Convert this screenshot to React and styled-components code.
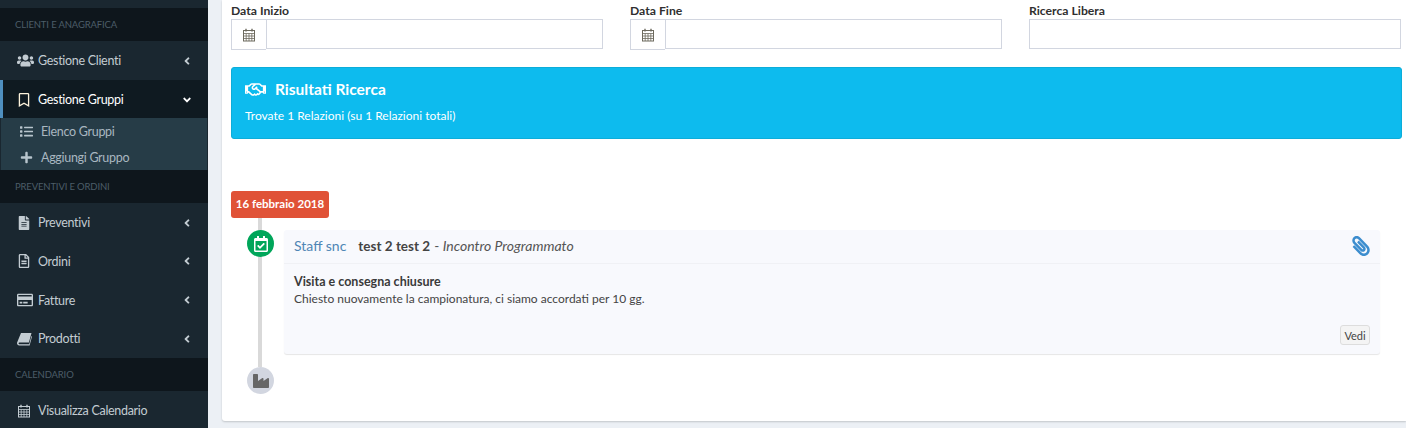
import styled, { createGlobalStyle } from "styled-components";
import {
  FaUsers,
  FaRegBookmark,
  FaList,
  FaPlus,
  FaFileAlt,
  FaRegFileAlt,
  FaRegCreditCard,
  FaAngleLeft,
  FaAngleDown,
  FaRegHandshake,
  FaRegCalendarCheck,
  FaIndustry,
  FaPaperclip,
} from "react-icons/fa";

const GlobalStyle = createGlobalStyle`
  html, body {
    margin: 0;
    height: 428px;
    overflow: hidden;
    background: #ecf0f5;
    font-family: "Lato", "Noto Sans", sans-serif;
    font-size: 13px;
    color: #333;
  }
  * { box-sizing: border-box; }
`;

const Page = styled.div`
  display: flex;
  width: 1406px;
  height: 428px;
  overflow: hidden;
`;

const Sidebar = styled.aside`
  width: 208px;
  flex: none;
  padding-top: 8px;
  background: #1a2730;
`;

const SectionTitle = styled.div`
  height: 33px;
  padding-left: 15px;
  display: flex;
  align-items: center;
  background: #0e161c;
  color: #4c5d68;
  font-size: 9.5px;
  letter-spacing: -0.15px;
`;

const MenuRow = styled.div`
  height: ${(p) => p.$h || 38.75}px;
  display: flex;
  align-items: center;
  padding-left: ${(p) => (p.$active ? 14 : 17)}px;
  padding-right: 15px;
  padding-top: ${(p) => (p.$active ? 2 : 1)}px;
  border-left: ${(p) => (p.$active ? "3px solid #4f8fbf" : "none")};
  background: ${(p) => (p.$active ? "#0f1a21" : "transparent")};
  color: ${(p) => (p.$active ? "#fff" : "#c3ccd2")};
  font-size: 12.5px;
  letter-spacing: -0.3px;
`;

const MenuIcon = styled.span`
  width: 21px;
  flex: none;
  display: flex;
  align-items: center;
  font-size: ${(p) => p.$size || 14}px;
  color: ${(p) => (p.$active ? "#fdf3dc" : "#c3ccd2")};
`;

const MenuLabel = styled.span`
  flex: 1;
`;

const Arrow = styled.span`
  display: flex;
  font-size: 12px;
`;

const SubMenu = styled.div`
  height: 52px;
  margin-left: 1px;
  margin-right: 1px;
  background: #263c47;
`;

const SubRow = styled.div`
  height: 26px;
  display: flex;
  align-items: center;
  padding-left: 19px;
  padding-top: 2px;
  color: #a9b7c0;
  font-size: 12.5px;
  letter-spacing: -0.3px;

  svg {
    flex: none;
    width: 13px;
    height: 13px;
    margin-right: 8px;
    color: #b8c5cd;
  }
`;

const Main = styled.main`
  flex: 1;
  margin-left: 14px;
  height: 421px;
  padding: 3px 4px 0 9px;
  background: #fff;
  border-radius: 0 0 0 3px;
  box-shadow: 0 1px 2px rgba(0, 0, 0, 0.18);
`;

const Filters = styled.div`
  display: grid;
  grid-template-columns: 372px 372px 372px;
  column-gap: 27px;
`;

const FieldLabel = styled.label`
  display: block;
  height: 16px;
  line-height: 15px;
  font-size: 12.2px;
  font-weight: 700;
  color: #2f2f2f;
`;

const InputGroup = styled.div`
  display: flex;
  align-items: flex-start;
`;

const Addon = styled.span`
  width: 35px;
  height: 31px;
  flex: none;
  display: flex;
  align-items: center;
  justify-content: center;
  border: 1px solid #d2d6e0;
  border-right: none;
  color: #6d6a5e;
`;

const Input = styled.div`
  flex: 1;
  height: 30px;
  border: 1px solid #d2d6e0;
  background: #fff;
`;

const Callout = styled.section`
  width: 1171px;
  height: 72px;
  margin-top: 17px;
  padding: 10px 13px;
  background: #0dbbee;
  border: 1px solid #0cadd9;
  border-radius: 3px;
  color: #fff;
`;

const CalloutTitle = styled.h4`
  margin: 0;
  height: 22px;
  display: flex;
  align-items: center;
  gap: 9px;
  font-size: 15.5px;
  font-weight: 700;

  svg {
    font-size: 21px;
  }
`;

const CalloutText = styled.p`
  margin: 8px 0 0;
  font-size: 12px;
`;

const Timeline = styled.div`
  margin-top: 52px;
  width: 1149px;
`;

const DateBadge = styled.span`
  display: flex;
  align-items: center;
  justify-content: center;
  width: 98px;
  height: 27px;
  padding-bottom: 2px;
  background: #e05237;
  border-radius: 3px;
  color: #fff;
  font-size: 11.5px;
  font-weight: 700;
`;

const Track = styled.div`
  position: relative;
  padding: 12px 0 13px 53px;

  &::before {
    content: "";
    position: absolute;
    left: 27px;
    top: 0;
    bottom: 0;
    width: 4px;
    background: #d9d9d9;
  }
`;

const Dot = styled.span`
  position: absolute;
  left: 16px;
  top: ${(p) => p.$top}px;
  width: 27px;
  height: 27px;
  border-radius: 50%;
  display: flex;
  align-items: center;
  justify-content: center;
  background: ${(p) => p.$bg};
  color: ${(p) => p.$fg};
  font-size: 16px;
`;

const Card = styled.article`
  width: 1096px;
  height: 124px;
  display: flex;
  flex-direction: column;
  background: #f8f9fd;
  border-radius: 3px;
  box-shadow: 0 1px 1px rgba(0, 0, 0, 0.1);
`;

const CardHeader = styled.header`
  height: 34px;
  flex: none;
  display: flex;
  align-items: center;
  padding: 0 9px 2px 10px;
  border-bottom: 1px solid #f0f1f5;
  font-size: 13.5px;
  color: #555;
`;

const Company = styled.span`
  color: #4f86b5;
  font-size: 14px;
  margin-right: 12px;
`;

const Person = styled.strong`
  color: #444;
  margin-right: 4px;
`;

const Title = styled.em`
  font-size: 14px;
`;

const Clip = styled.span`
  margin-left: auto;
  display: flex;
  color: #3c8dce;
  font-size: 20px;
  transform: scaleX(-1);
`;

const CardBody = styled.div`
  flex: 1;
  padding: 9px 10px 0;
  font-size: 12px;
  line-height: 17px;
  color: #444;
`;

const CardTitle = styled.div`
  font-size: 12.5px;
  font-weight: 700;
  color: #3a3a3a;
`;

const CardFooter = styled.div`
  display: flex;
  justify-content: flex-end;
  padding: 0 10px 9px;
`;

const SmallButton = styled.button`
  width: 30px;
  height: 20px;
  padding: 0;
  background: #f4f4f4;
  border: 1px solid #ddd;
  border-radius: 3px;
  font-family: inherit;
  font-size: 11px;
  color: #444;
`;

// fa4 calendar, the fa5 one in react-icons has no visible grid
const CalendarIcon = () => (
  <svg width="14" height="14" viewBox="0 0 14 14" fill="none" stroke="currentColor">
    <rect x="1.5" y="2.5" width="11" height="10.5" strokeWidth="1" />
    <path d="M1.5 5.5h11M1.5 8h11M1.5 10.5h11M4.2 5.5V13M7 5.5V13M9.8 5.5V13" strokeWidth="0.8" />
    <path d="M4 .8v2.6M10 .8v2.6" strokeWidth="1.4" />
  </svg>
);

// fa4 book is slanted
const BookIcon = () => (
  <svg width="15" height="14" viewBox="0 0 15 14" fill="currentColor">
    <path d="M4 1h10.5l-2.6 9.6H2.6c-.7 0-1 .4-1 .8s.3.9 1 .9h9.6l2.2-8.2.6.4-2.4 8.9H2.4C.9 13.4 0 12.4 0 11.3c0-.3 0-.6.1-.9z" />
  </svg>
);

const menuA = [{ icon: <FaUsers />, label: "Gestione Clienti", size: 17 }];
const menuB = [
  { icon: <FaFileAlt />, label: "Preventivi", size: 14 },
  { icon: <FaRegFileAlt />, label: "Ordini", size: 14 },
  { icon: <FaRegCreditCard />, label: "Fatture", size: 16 },
  { icon: <BookIcon />, label: "Prodotti" },
];

const Item = ({ icon, label, size }) => (
  <MenuRow>
    <MenuIcon $size={size}>{icon}</MenuIcon>
    <MenuLabel>{label}</MenuLabel>
    <Arrow>
      <FaAngleLeft />
    </Arrow>
  </MenuRow>
);

const DateField = ({ label }) => (
  <div>
    <FieldLabel>{label}</FieldLabel>
    <InputGroup>
      <Addon>
        <CalendarIcon />
      </Addon>
      <Input />
    </InputGroup>
  </div>
);

export default function App() {
  return (
    <Page>
      <GlobalStyle />
      <Sidebar>
        <SectionTitle>CLIENTI E ANAGRAFICA</SectionTitle>
        {menuA.map((m) => (
          <Item key={m.label} {...m} />
        ))}
        <MenuRow $active $h={38}>
          <MenuIcon $active>
            <FaRegBookmark />
          </MenuIcon>
          <MenuLabel>Gestione Gruppi</MenuLabel>
          <Arrow>
            <FaAngleDown />
          </Arrow>
        </MenuRow>
        <SubMenu>
          <SubRow>
            <FaList />
            Elenco Gruppi
          </SubRow>
          <SubRow>
            <FaPlus />
            Aggiungi Gruppo
          </SubRow>
        </SubMenu>
        <SectionTitle>PREVENTIVI E ORDINI</SectionTitle>
        {menuB.map((m) => (
          <Item key={m.label} {...m} />
        ))}
        <SectionTitle>CALENDARIO</SectionTitle>
        <MenuRow>
          <MenuIcon>
            <CalendarIcon />
          </MenuIcon>
          <MenuLabel>Visualizza Calendario</MenuLabel>
        </MenuRow>
      </Sidebar>
      <Main>
        <Filters>
          <DateField label="Data Inizio" />
          <DateField label="Data Fine" />
          <div>
            <FieldLabel>Ricerca Libera</FieldLabel>
            <Input />
          </div>
        </Filters>
        <Callout>
          <CalloutTitle>
            <FaRegHandshake />
            Risultati Ricerca
          </CalloutTitle>
          <CalloutText>Trovate 1 Relazioni (su 1 Relazioni totali)</CalloutText>
        </Callout>
        <Timeline>
          <DateBadge>16 febbraio 2018</DateBadge>
          <Track>
            <Dot $top={12} $bg="#00a65a" $fg="#fff">
              <FaRegCalendarCheck />
            </Dot>
            <Card>
              <CardHeader>
                <Company>Staff snc</Company>
                <Person>test 2 test 2</Person>
                <span>
                  - <Title>Incontro Programmato</Title>
                </span>
                <Clip>
                  <FaPaperclip />
                </Clip>
              </CardHeader>
              <CardBody>
                <CardTitle>Visita e consegna chiusure</CardTitle>
                Chiesto nuovamente la campionatura, ci siamo accordati per 10 gg.
              </CardBody>
              <CardFooter>
                <SmallButton>Vedi</SmallButton>
              </CardFooter>
            </Card>
            <Dot $top={149} $bg="#d2d6e0" $fg="#666">
              <FaIndustry />
            </Dot>
          </Track>
        </Timeline>
      </Main>
    </Page>
  );
}
